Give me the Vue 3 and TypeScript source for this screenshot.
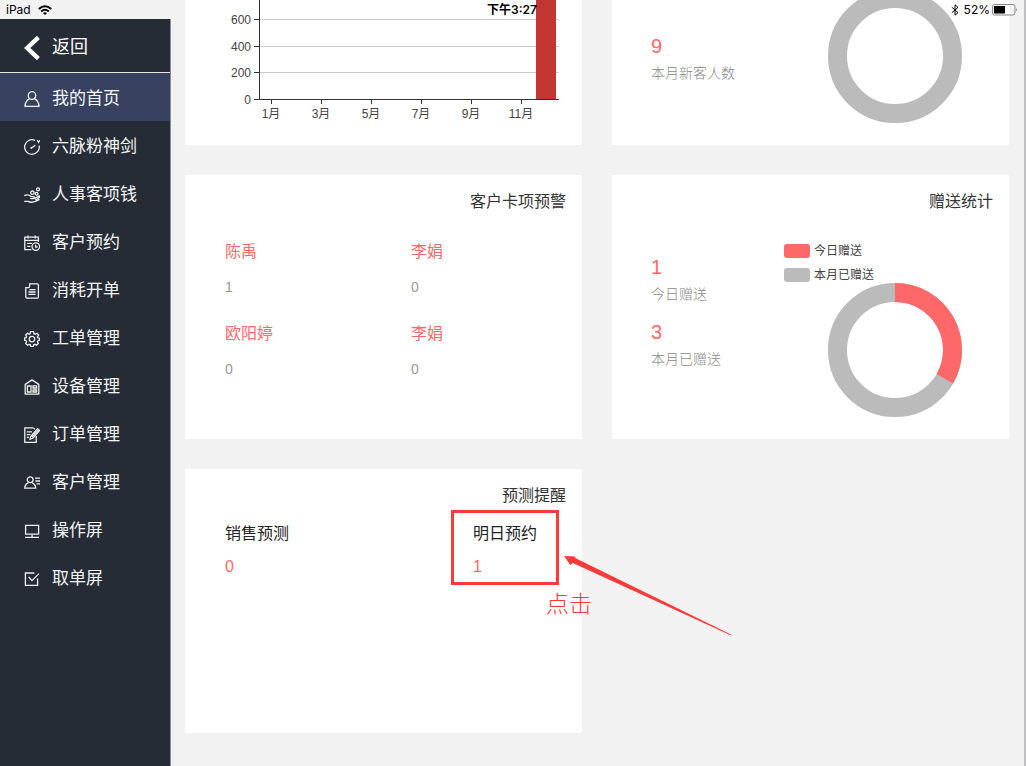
<script setup lang="ts">
import { ref } from 'vue'

interface NavItem {
  label: string
  paths: string[]
}

interface Stat {
  value: number
  label: string
}

const navItems: NavItem[] = [
  {
    label: '我的首页',
    paths: ['M8 .6a3.7 3.9 0 1 1 0 7.8a3.7 3.9 0 1 1 0-7.8z', 'M5.6 7.6C3 8.8 1.2 11.4 1 15.4H15C14.8 11.4 13 8.8 10.4 7.6'],
  },
  {
    label: '六脉粉神剑',
    paths: ['M11 1.4A7.3 7.3 0 1 0 15.1 6.6', 'M7.2 9.2L11.4 6.2', 'M7.6 8L6.8 9.6', 'M13.2 1.2L14.6 3.4L15.8 1.4'],
  },
  {
    label: '人事客项钱',
    paths: [
      'M14 .8a1.5 1.5 0 1 1 0 3a1.5 1.5 0 1 1 0-3z',
      'M8.4 4a1.7 1.7 0 1 1 0 3.4a1.7 1.7 0 1 1 0-3.4z',
      'M12.6 5.4a1.4 1.4 0 1 1 0 2.8a1.4 1.4 0 1 1 0-2.8z',
      'M.2 8.6C3 7.2 5 7.6 7 9.4L10.4 10.2C11.4 11.4 9.6 12 6.2 11.4',
      'M10.6 11.4L15.4 9C16 10.4 13.4 12 11 13',
      'M.2 14.4H4.2C7 16 10 15.8 15.6 12.4',
    ],
  },
  {
    label: '客户预约',
    paths: [
      'M7.4 14.6H.8V2.2H14.4V7',
      'M.8 5.4H14.4M4 .4V3.6M11.2 .4V3.6',
      'M3.2 8.4H8M3.2 11.4H6.4',
      'M11.8 7.8a3.8 3.8 0 1 1 0 7.6a3.8 3.8 0 1 1 0-7.6z',
      'M11.6 9.8V12H13.6',
    ],
  },
  {
    label: '消耗开单',
    paths: ['M5.6 .8H13.2Q14.4 .8 14.4 2V14Q14.4 15.2 13.2 15.2H3Q1.8 15.2 1.8 14V4.6H4.6Q5.6 4.6 5.6 3.6z', 'M5.4 6.6H11.6M4.4 9H11.6M4.4 11.4H11.6'],
  },
  {
    label: '工单管理',
    paths: [
      'M6.5 .7H9.5L10 2.7L11.2 3.2L13 2.2L14.6 4L13.5 5.8L14 6.9L15.4 7.2V9.2L14 9.7L13.4 10.8L14.3 12.4L12.5 14.2L10.9 13.3L9.8 13.8L9.3 15.4H6.8L6.3 13.8L5.1 13.3L3.5 14.2L1.7 12.4L2.6 10.8L2.1 9.7L.6 9.2V7.1L2.1 6.7L2.6 5.6L1.7 4L3.4 2.2L5 3.2L6.1 2.7z',
      'M8 5.3a2.8 2.8 0 1 1 0 5.6a2.8 2.8 0 1 1 0-5.6z',
    ],
  },
  {
    label: '设备管理',
    paths: ['M1.2 15.2V5.4L8 .9L14.8 5.4V15.2z', 'M3.4 7H7V13H3.4zM9 6.8H12.6V9H9zM9 11H12.6V13H9z'],
  },
  {
    label: '订单管理',
    paths: ['M9.4 .9H.8V15.3H12.2V9', 'M9.4 .9L11 2.4', 'M2.8 4.8H8M2.8 7.6H6.4M2.8 10.4H5', 'M6 12.2L6.8 9.2L13.6 1.6L15.6 3.4L8.8 11.2z', 'M8 10L14.4 2.8'],
  },
  {
    label: '客户管理',
    paths: ['M6.2 1.8a2.9 2.9 0 1 1 0 5.8a2.9 2.9 0 1 1 0-5.8z', 'M4.2 7.8Q.8 9.4 .7 13.2H11.8Q11.6 9.4 8.2 7.8', 'M11 3.2H16M11.4 6H16M12.6 8.8H16'],
  },
  {
    label: '操作屏',
    paths: ['M1.6 2.4H14.6V11.2H1.6z', 'M8.1 11.2V14M1 14.4H15'],
  },
  {
    label: '取单屏',
    paths: ['M10.4 2H1.4V14.4H13.6V7.6', 'M4.6 6L8 9.6L15 2.6'],
  },
]

const active = ref(0)

const yTicks = [
  { value: 600, y: 19 },
  { value: 400, y: 46 },
  { value: 200, y: 72 },
  { value: 0, y: 99 },
]
const months = ['1月', '3月', '5月', '7月', '9月', '11月']

const cardAlerts = [
  { name: '陈禹', count: 1 },
  { name: '李娟', count: 0 },
  { name: '欧阳婷', count: 0 },
  { name: '李娟', count: 0 },
]

const newGuests: Stat[] = [{ value: 9, label: '本月新客人数' }]
const gifts: Stat[] = [
  { value: 1, label: '今日赠送' },
  { value: 3, label: '本月已赠送' },
]
</script>

<template>
  <div class="page">
    <header class="status">
      <div class="status-left">
        <span>iPad</span>
        <svg width="14" height="10" viewBox="0 0 14 10" fill="none" stroke="#000" stroke-width="2">
          <path d="M.8 4Q7-1.6 13.2 4" />
          <path d="M3.2 6.4Q7 3.2 10.8 6.4" />
          <path d="M5 8L7 10L9 8Q7 6.4 5 8z" fill="#000" stroke="none" />
        </svg>
      </div>
      <time class="clock">下午3:27</time>
      <div class="status-right">
        <svg width="8" height="12" viewBox="0 0 8 12" fill="none" stroke="#000">
          <path d="M.8 3.2L7 8.6L4 11.2V.8L7 3.4L.8 8.8" />
        </svg>
        <span class="percent">52%</span>
        <svg width="26" height="12" viewBox="0 0 26 12">
          <rect x=".5" y=".5" width="22.5" height="10.5" rx="2" fill="none" stroke="#888" />
          <rect x="2" y="2" width="11" height="7.5" fill="#000" />
          <path d="M24.2 4Q26 5.8 24.2 7.6z" fill="#777" />
        </svg>
      </div>
    </header>

    <aside class="sidebar">
      <button class="back" type="button">
        <svg width="16" height="24" viewBox="0 0 16 24" fill="none" stroke="#fff" stroke-width="4.4">
          <path d="M14.4 1.4L3.2 12L14.4 22.6" />
        </svg>
        <span>返回</span>
      </button>
      <nav>
        <a
          v-for="(item, i) in navItems"
          :key="item.label"
          href="#"
          class="nav-item"
          :class="{ active: i === active }"
          @click.prevent="active = i"
        >
          <svg class="nav-icon" width="16" height="16" viewBox="0 0 16 16">
            <path v-for="d in item.paths" :key="d" :d="d" />
          </svg>
          <span>{{ item.label }}</span>
        </a>
      </nav>
    </aside>

    <main class="content">
      <section class="card">
        <svg class="bar-chart" viewBox="0 0 397 145" role="img" aria-label="月度柱状图">
          <g v-for="t in yTicks" :key="t.value">
            <path v-if="t.value" :d="`M75 ${t.y}.5H374`" stroke="#ccc" />
            <path :d="`M69 ${t.y}.5H75`" stroke="#333" />
            <text x="66" :y="t.y + 5" text-anchor="end">{{ t.value }}</text>
          </g>
          <rect x="351" y="0" width="20" height="99" fill="#c23531" />
          <path d="M74.500 0V99.500H374" fill="none" stroke="#333" />
          <g v-for="(m, i) in months" :key="m">
            <path :d="`M${86 + i * 50}.5 99V104`" stroke="#333" />
            <text :x="86 + i * 50" y="118" text-anchor="middle">{{ m }}</text>
          </g>
        </svg>
      </section>

      <section class="card">
        <div class="split first">
          <div class="stats">
            <div v-for="s in newGuests" :key="s.label" class="stat">
              <strong>{{ s.value }}</strong>
              <span>{{ s.label }}</span>
            </div>
          </div>
          <svg class="donut" width="225" height="145" viewBox="0 0 225 145">
            <circle cx="111" cy="56" r="57.5" fill="none" stroke="#bbb" stroke-width="19" />
          </svg>
        </div>
      </section>

      <section class="card">
        <h2>客户卡项预警</h2>
        <div class="alerts">
          <div v-for="(a, i) in cardAlerts" :key="i" class="alert">
            <span class="alert-name">{{ a.name }}</span>
            <span class="alert-count">{{ a.count }}</span>
          </div>
        </div>
      </section>

      <section class="card">
        <h2>赠送统计</h2>
        <div class="split">
          <div class="stats">
            <div v-for="s in gifts" :key="s.label" class="stat">
              <strong>{{ s.value }}</strong>
              <span>{{ s.label }}</span>
            </div>
          </div>
          <svg class="donut" width="225" height="188" viewBox="0 0 225 188">
            <rect x="0" y="5" width="26" height="14" rx="3" fill="#ff6869" />
            <text x="30" y="16">今日赠送</text>
            <rect x="0" y="29" width="26" height="14" rx="3" fill="#bbb" />
            <text x="30" y="40">本月已赠送</text>
            <g fill="none" stroke-width="19">
              <circle cx="111" cy="111" r="57.5" stroke="#bbb" />
              <path d="M111 53.500A57.500 57.500 0 0 1 160.800 139.750" stroke="#ff6869" />
            </g>
          </svg>
        </div>
      </section>

      <section class="card">
        <h2>预测提醒</h2>
        <div class="forecasts">
          <button class="forecast" type="button">
            <span class="forecast-name">销售预测</span>
            <span class="forecast-count">0</span>
          </button>
          <div class="marked">
            <button class="forecast" type="button">
              <span class="forecast-name">明日预约</span>
              <span class="forecast-count">1</span>
            </button>
            <svg class="arrow" width="168" height="81" viewBox="0 0 168 81" fill="#fb3a3a">
              <path d="M0 1L11 1.400L11.600 3.200L167 79.500L166.600 80.200L8.800 8L6.300 10z" />
            </svg>
            <span class="hint">点击</span>
          </div>
        </div>
      </section>
    </main>
  </div>
</template>

<style>
body {
  margin: 0;
  background: #f2f2f2;
}
</style>

<style scoped>
.page {
  position: relative;
  display: flex;
  min-height: 100vh;
  box-sizing: border-box;
  border-right: 2px solid #c0c0c2;
  background: #f2f2f2;
  font-family: "Liberation Sans", "Noto Sans CJK SC", sans-serif;
  color: #333;
}

.status {
  position: absolute;
  top: 0;
  left: 0;
  right: -2px;
  z-index: 2;
  display: grid;
  grid-template-columns: 1fr auto 1fr;
  align-items: center;
  height: 19px;
  padding: 0 8px 0 6px;
  font-family: Inter, "Noto Sans CJK SC", sans-serif;
  font-size: 12px;
  line-height: 18px;
  color: #000;
}

.status-left,
.status-right {
  display: flex;
  align-items: center;
  gap: 7px;
}

.status-right {
  justify-content: flex-end;
  gap: 2px;
}

.percent {
  margin-left: 3px;
}

.clock {
  font-weight: 600;
}

.sidebar {
  flex: 0 0 170px;
  margin-top: 19px;
  border-right: 1px solid #8b8e94;
  background: #262c36;
}

.back {
  display: flex;
  align-items: center;
  gap: 12px;
  width: 100%;
  height: 54px;
  padding: 4px 24px 0;
  border: 0;
  border-bottom: 1px solid #e6e6e0;
  background: none;
  font: inherit;
  font-size: 18px;
  line-height: 24px;
  color: #fff;
}

.back span {
  padding-bottom: 2px;
}

.nav-item {
  display: flex;
  align-items: center;
  gap: 12px;
  height: 44px;
  padding: 4px 24px 0;
  font-size: 17px;
  line-height: 24px;
  color: #f4f5f7;
  text-decoration: none;
  white-space: nowrap;
}

.nav-item.active {
  background: #384260;
}

.nav-icon {
  flex: none;
  fill: none;
  stroke: #eeeff1;
  stroke-width: 1.3;
}

.content {
  flex: 1;
  display: grid;
  grid-template-columns: 1fr 1fr;
  grid-template-rows: 145px 264px 264px;
  gap: 30px;
  min-width: 0;
  padding: 0 15px 33px 14px;
}

.card {
  min-width: 0;
  background: #fff;
}

.card h2 {
  margin: 0;
  padding: 15px 16px 0 0;
  font-size: 16px;
  font-weight: 400;
  line-height: 24px;
  text-align: right;
}

.bar-chart {
  display: block;
  width: 100%;
}

.bar-chart text,
.donut text {
  font-size: 12px;
  fill: #444;
}

.split {
  display: flex;
  justify-content: space-between;
  padding: 25px 0 0 39px;
}

.split.first {
  padding-top: 0;
}

.stats {
  display: flex;
  flex-direction: column;
  gap: 11px;
  padding-top: 14px;
}

.first .stats {
  padding-top: 32px;
}

.stat {
  display: flex;
  flex-direction: column;
  font-size: 14px;
  font-weight: 300;
  line-height: 26px;
  color: #888;
}

.stat strong {
  font-size: 20px;
  font-weight: 400;
  line-height: 28px;
  color: #ff6869;
}

.donut {
  display: block;
  flex: none;
}

.alerts {
  display: grid;
  grid-template-columns: 186px 1fr;
  row-gap: 12px;
  padding: 19px 0 0 40px;
}

.alert {
  display: flex;
  flex-direction: column;
}

.alert-name {
  font-size: 16px;
  line-height: 38px;
  color: #ff6869;
}

.alert-count {
  font-size: 14px;
  line-height: 32px;
  color: #999;
}

.forecasts {
  display: grid;
  grid-template-columns: 248px 1fr;
  justify-items: start;
  padding: 9px 0 0 40px;
}

.forecast {
  display: flex;
  flex-direction: column;
  padding: 0;
  border: 0;
  background: none;
  font: inherit;
  font-size: 16px;
  line-height: 33px;
  text-align: left;
  color: #222;
}

.forecast-count {
  color: #ff6869;
}

.marked {
  position: relative;
}

.marked::after {
  content: "";
  position: absolute;
  inset: -7px -22px -2px;
  border: 3px solid #fb3a3a;
  pointer-events: none;
}

.arrow {
  position: absolute;
  top: 38px;
  left: 91px;
}

.hint {
  position: absolute;
  top: 71px;
  left: 73px;
  font-size: 23px;
  font-weight: 300;
  line-height: 32px;
  color: #fb3a3a;
  white-space: nowrap;
}
</style>
